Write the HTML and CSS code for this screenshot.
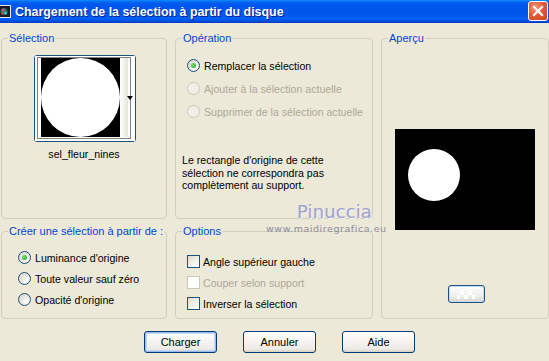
FILE: index.html
```html
<!DOCTYPE html>
<html lang="fr">
<head>
<meta charset="utf-8">
<title>Chargement de la sélection à partir du disque</title>
<link rel="stylesheet" href="styles.css">
</head>
<body>
<div class="window">
  <div class="titlebar">
    <span class="app-icon">
      <svg width="11" height="13" viewBox="0 0 11 13">
        <rect x="0" y="0" width="11" height="13" fill="#e8e8e8"/>
        <rect x="0" y="1" width="10" height="11" fill="#1a1a2a"/>
        <circle cx="4" cy="6.5" r="3.5" fill="#2a7a3a"/>
        <circle cx="3" cy="5" r="1.5" fill="#d040d0"/>
        <circle cx="5.5" cy="8" r="1.4" fill="#40c0ff"/>
        <circle cx="2.5" cy="8.5" r="1" fill="#ff4040"/>
      </svg>
    </span>
    <span class="title">Chargement de la sélection à partir du disque</span>
    <span class="close">
      <svg width="20" height="20" viewBox="0 0 20 20">
        <path d="M6 6 L14 14 M14 6 L6 14" stroke="#fff" stroke-width="2.2" stroke-linecap="square"/>
      </svg>
    </span>
  </div>

  <div class="content">
    <div class="groups">
      <section class="group g-sel">
        <span class="legend">Sélection</span>
        <div class="thumb">
          <svg width="100" height="85" viewBox="0 0 100 85">
            <defs>
              <linearGradient id="strip" x1="0" x2="1" y1="0" y2="0">
                <stop offset="0" stop-color="#ffffff"/>
                <stop offset="1" stop-color="#e4e4dc"/>
              </linearGradient>
            </defs>
            <rect x="0" y="0" width="100" height="85" fill="#ffffff"/>
            <rect x="6" y="2" width="79" height="79" fill="#000"/>
            <circle cx="45.5" cy="41.5" r="39.5" fill="#fff"/>
            <rect x="85" y="2" width="8" height="79" fill="url(#strip)"/>
            <rect x="2.5" y="1.5" width="93" height="81" fill="none" stroke="#000" stroke-width="1" stroke-dasharray="1 1"/>
            <polygon points="92,40 98,40 95,44" fill="#000"/>
          </svg>
        </div>
        <div class="thumb-label">sel_fleur_nines</div>
      </section>

      <section class="group g-op">
        <span class="legend">Opération</span>
        <div class="opt-row"><span class="radio checked"></span><span>Remplacer la sélection</span></div>
        <div class="opt-row disabled"><span class="radio"></span><span>Ajouter à la sélection actuelle</span></div>
        <div class="opt-row disabled"><span class="radio"></span><span>Supprimer de la sélection actuelle</span></div>
        <p class="note">Le rectangle d'origine de cette sélection ne correspondra pas complètement au support.</p>
      </section>

      <section class="group g-prev">
        <span class="legend">Aperçu</span>
        <div class="preview">
          <svg width="140" height="101" viewBox="0 0 140 101">
            <rect width="140" height="101" fill="#000"/>
            <circle cx="39" cy="46" r="26" fill="#fff"/>
          </svg>
        </div>
        <div class="mini-btn">
          <svg width="35" height="16" viewBox="0 0 35 16">
            <rect x="11" y="5" width="4" height="4" fill="#fff"/>
            <rect x="19" y="5" width="4" height="4" fill="#fff"/>
            <rect x="15" y="9" width="4" height="4" fill="#fff"/>
            <rect x="23" y="9" width="3" height="4" fill="#fff"/>
            <rect x="8" y="9" width="3" height="4" fill="#fff"/>
          </svg>
        </div>
      </section>

      <section class="group g-create">
        <span class="legend">Créer une sélection à partir de :</span>
        <div class="opt-row small"><span class="radio checked"></span><span>Luminance d'origine</span></div>
        <div class="opt-row small"><span class="radio"></span><span>Toute valeur sauf zéro</span></div>
        <div class="opt-row small"><span class="radio"></span><span>Opacité d'origine</span></div>
      </section>

      <section class="group g-opt">
        <span class="legend">Options</span>
        <div class="opt-row small"><span class="check"></span><span>Angle supérieur gauche</span></div>
        <div class="opt-row small disabled"><span class="check"></span><span>Couper selon support</span></div>
        <div class="opt-row small"><span class="check"></span><span>Inverser la sélection</span></div>
      </section>
    </div>

    <div class="buttons">
      <button class="btn default">Charger</button>
      <button class="btn">Annuler</button>
      <button class="btn">Aide</button>
    </div>

    <div class="watermark">
      <span class="wm-name">Pinuccia</span>
      <span class="wm-url">www.maidiregrafica.eu</span>
    </div>
  </div>
</div>
</body>
</html>
```

FILE: styles.css
```css
* { box-sizing: border-box; }

html, body {
  margin: 0;
  padding: 0;
  background: #ECE9D8;
}

body {
  width: 549px;
  height: 361px;
  overflow: hidden;
  font-family: "Liberation Sans", Arial, sans-serif;
  font-size: 10.6px;
  color: #000;
}

.window {
  width: 549px;
  height: 361px;
  background: #ECE9D8;
}

/* ---------- title bar ---------- */
.titlebar {
  height: 23px;
  display: flex;
  align-items: center;
  background: linear-gradient(to bottom,
    #0A8CFF 0px, #0867F2 2px, #0058EE 4px, #0055EA 10px,
    #0058EE 16px, #0062F7 19px, #0059EE 20px, #0042CF 22px, #003BC1 23px);
  color: #fff;
}

.app-icon {
  width: 11px;
  height: 13px;
  display: flex;
}

.title {
  margin-left: 4px;
  font-family: "Liberation Sans", Arial, sans-serif;
  font-weight: bold;
  font-size: 12.4px;
  text-shadow: 1px 1px 0 #0A1E8C;
  flex: 1;
  padding-top: 1px;
}

.close {
  width: 20px;
  height: 20px;
  margin-right: 1px;
  margin-top: -1px;
  border: 1px solid #fff;
  border-radius: 3px;
  background: radial-gradient(circle at 35% 30%, #F29A7E 0%, #E45A36 45%, #C8421E 100%);
  display: flex;
  align-items: center;
  justify-content: center;
}
.close svg { margin: -1px; }

/* ---------- content ---------- */
.content {
  position: relative;
  padding: 15px 0 0 1px;
}

.groups {
  display: grid;
  grid-template-columns: 166px 198px 168px;
  grid-template-rows: 181px 88px;
  column-gap: 8px;
  row-gap: 12px;
}

.group {
  position: relative;
  border: 1px solid #D0D0BF;
  border-radius: 4px;
}

.legend {
  position: absolute;
  top: -7px;
  left: 6px;
  padding: 0 1px;
  line-height: 13px;
  font-size: 11px;
  background: #ECE9D8;
  color: #0046D5;
  white-space: nowrap;
}

.g-sel { grid-column: 1; grid-row: 1; display: flex; flex-direction: column; align-items: center; }
.g-op { grid-column: 2; grid-row: 1; padding: 15px 0 0 11px; }
.g-prev { grid-column: 3; grid-row: 1 / span 2; display: flex; flex-direction: column; align-items: center; }
.g-create { grid-column: 1; grid-row: 2; padding: 15px 0 0 16px; }
.g-opt { grid-column: 2; grid-row: 2; padding: 19px 0 0 11px; }

/* thumbnail */
.thumb {
  margin-top: 16px;
  margin-left: 1px;
  width: 102px;
  height: 87px;
  border: 1px solid #1C5180;
  border-radius: 3px;
  background: #fff;
  display: flex;
}
.thumb-label {
  margin-top: 6px;
  line-height: 13px;
}

/* option rows */
.opt-row {
  height: 23px;
  display: flex;
  align-items: center;
  gap: 4px;
  white-space: nowrap;
}
.opt-row.small { height: 21px; }
.g-opt .opt-row { gap: 3px; }
.opt-row.disabled { color: #ACA899; }

.radio {
  width: 13px;
  height: 13px;
  border-radius: 50%;
  border: 1px solid #1C5180;
  background: radial-gradient(circle at 70% 70%, #FFFFFF 0%, #E8E8E2 45%, #D4D2C6 100%);
  display: flex;
  align-items: center;
  justify-content: center;
  flex: none;
}
.radio.checked::after {
  content: "";
  width: 5px;
  height: 5px;
  border-radius: 50%;
  background: radial-gradient(circle at 35% 35%, #6FE36A, #21A121);
}
.disabled .radio {
  border-color: #CAC8BB;
  background: #F2F0E6;
}

.check {
  width: 13px;
  height: 13px;
  border: 1px solid #1C5180;
  background: linear-gradient(135deg, #DCDCD7 0%, #F2F2EE 60%, #FFFFFF 100%);
  flex: none;
}
.disabled .check {
  border-color: #CAC8BB;
  background: #fff;
}

.note {
  margin: 31px 0 0 -5px;
  line-height: 12.5px;
  width: 180px;
}

/* preview */
.preview {
  margin-top: 90px;
  width: 140px;
  height: 101px;
  display: flex;
}
.mini-btn {
  margin-top: 55px;
  margin-left: 2px;
  width: 37px;
  height: 18px;
  border: 1px solid #1C5180;
  border-radius: 3px;
  background: linear-gradient(to bottom, #FFFFFF 0%, #F0EFEA 60%, #D8D4CA 100%);
  display: flex;
  align-items: center;
  justify-content: center;
  box-shadow: inset 0 0 0 1px #C8DCF4;
}

/* buttons */
.buttons {
  display: flex;
  gap: 26px;
  margin: 12px 0 0 143px;
}
.btn {
  width: 73px;
  height: 22px;
  padding: 0;
  border: 1px solid #003C74;
  border-radius: 3px;
  background: linear-gradient(to bottom, #FFFFFF 0%, #F4F3EE 50%, #ECEBE6 85%, #D6D0C5 100%);
  font-family: "Liberation Sans", Arial, sans-serif;
  font-size: 11px;
  color: #000;
}
.btn.default {
  box-shadow: inset 0 0 0 1px #9DBCEB, inset 0 0 0 2px #C4D9F7;
}

/* watermark overlay */
.watermark {
  position: absolute;
  left: 0;
  top: 0;
  width: 0;
  height: 0;
}
.wm-name {
  position: absolute;
  left: 297px;
  top: 178px;
  font-family: "DejaVu Sans", sans-serif;
  font-size: 18px;
  letter-spacing: 0.1px;
  color: #A2A2C6;
  text-shadow: 1px 1px 0 #F4F4FA, -1px 0 0 #E0E0EC;
  white-space: nowrap;
}
.wm-url {
  position: absolute;
  left: 266px;
  top: 200px;
  font-family: "DejaVu Sans", sans-serif;
  font-size: 9.5px;
  letter-spacing: 0.55px;
  color: #8C8C9C;
  white-space: nowrap;
}
```
